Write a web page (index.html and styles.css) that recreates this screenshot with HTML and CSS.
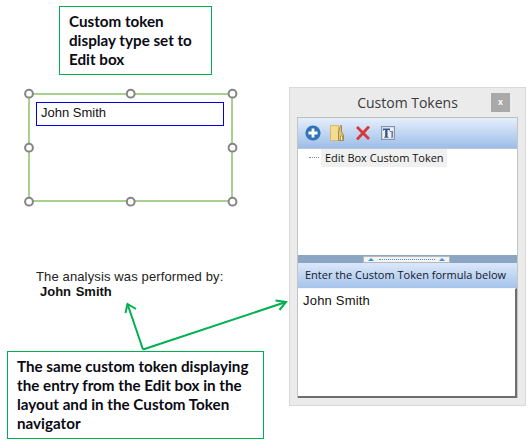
FILE: index.html
```html
<!DOCTYPE html>
<html lang="en">
<head>
<meta charset="utf-8">
<title>Custom Tokens</title>
<link rel="stylesheet" href="styles.css">
</head>
<body>
<main class="canvas">
  <div class="callout callout-top">Custom token display type set to Edit box</div>

  <div class="shape">
    <div class="editbox">John Smith</div>
  </div>
  <svg class="handles" width="220" height="124" viewBox="0 0 220 124" aria-hidden="true">
    <g fill="#fff" stroke="#858585" stroke-width="2">
      <circle cx="10" cy="10.7" r="3.9"/><circle cx="111.7" cy="10.7" r="3.9"/><circle cx="213.5" cy="10.7" r="3.9"/>
      <circle cx="10" cy="64.7" r="3.9"/><circle cx="213.5" cy="64.7" r="3.9"/>
      <circle cx="10" cy="118.7" r="3.9"/><circle cx="111.7" cy="118.7" r="3.9"/><circle cx="213.5" cy="118.7" r="3.9"/>
    </g>
  </svg>

  <p class="analysis">The analysis was performed by:</p>
  <p class="author">John Smith</p>

  <div class="callout callout-bottom">The same custom token displaying the entry from the Edit box in the layout and in the Custom Token navigator</div>

  <svg class="arrows" width="529" height="444" viewBox="0 0 529 444" aria-hidden="true">
    <g fill="none" stroke="#00b050" stroke-width="2">
      <path d="M143 349.5 L127.5 304"/>
      <path d="M125.5 313 L127.5 304 L136 309"/>
      <path d="M143 349.5 L286 302"/>
      <path d="M275.5 300.5 L286 302 L279.5 310"/>
    </g>
  </svg>

  <section class="panel">
    <header class="panel-title">
      <h1>Custom Tokens</h1>
      <div class="close">x</div>
    </header>
    <div class="panel-body">
      <div class="toolbar">
        <svg class="icon-add" width="16" height="16" viewBox="0 0 16 16" aria-hidden="true">
          <circle cx="8" cy="8" r="7.6" fill="#2f74b5"/>
          <path d="M8 3.5v9M3.5 8h9" stroke="#fff" stroke-width="2.8"/>
        </svg>
        <svg class="icon-folder" width="14" height="16" viewBox="0 0 14 16" aria-hidden="true">
          <path d="M.5.5h8v15h-8z" fill="#f2dc92" stroke="#d9ba68"/>
          <path d="M8.5 7l2-6.5h1v6.5l2 3v5.500h-5z" fill="#e3c474" stroke="#a98a45"/>
          <path d="M10.500 11h2v4.500h-2z" fill="#fbf3d2" stroke="#8c7235" stroke-width=".6"/>
        </svg>
        <svg class="icon-del" width="14" height="14" viewBox="0 0 14 14" aria-hidden="true">
          <path d="M1 1l12 12M13 .5L1 13.500" stroke="#d8383a" stroke-width="2.800"/>
        </svg>
        <svg class="icon-text" width="14" height="14" viewBox="0 0 14 14" aria-hidden="true">
          <rect x=".6" y=".6" width="12.800" height="12.800" fill="#eef2f8" stroke="#8494ab" stroke-width="1.200"/>
          <path d="M2 2.600h7v2.400l-1-1H6.500v6.800h.9v1H3.300v-1h.9V4H3l-1 1z" fill="#34508a"/>
          <path d="M8.800 5h3.200v6.700H9.800v-.8h.6v-5H9z" fill="#6b7ea6"/>
        </svg>
      </div>
      <div class="tree">
        <span class="tree-dots"></span>
        <span class="tree-item">Edit Box Custom Token</span>
      </div>
      <div class="splitter">
        <div class="grip">
          <span class="tri"></span>
          <span class="grip-dots"></span>
          <span class="tri"></span>
        </div>
      </div>
      <div class="formula-head">Enter the Custom Token formula below</div>
      <div class="formula">John Smith</div>
    </div>
  </section>
</main>
</body>
</html>
```
FILE: styles.css
```css
* { box-sizing: border-box; }
html, body { margin: 0; padding: 0; background: #fff; }
.canvas {
  position: relative;
  width: 529px;
  height: 444px;
  overflow: hidden;
  font-family: "Liberation Sans", Arial, sans-serif;
  color: #111;
}
.callout {
  position: absolute;
  border: 1px solid #00b050;
  background: #fff;
  font-family: Lato, "Open Sans", sans-serif;
  font-weight: 700;
  font-size: 15.2px;
  line-height: 19px;
  color: #0a0a14;
}
.callout-top { left: 59px; top: 6px; width: 153px; height: 69px; padding: 5px 8px 0 9px; }
.callout-bottom { left: 7px; top: 351px; width: 257px; height: 88px; padding: 5px 8px 0 9px; }

.shape {
  position: absolute;
  left: 28px; top: 93px;
  width: 205px; height: 109px;
  border: 2px solid #a9d18e;
  padding: 7px 7px 0 6px;
}
.editbox {
  width: 188px; height: 24px;
  border: 1px solid #0000e0;
  padding-left: 4px;
  font-size: 13px;
  line-height: 20px;
}
.handles { position: absolute; left: 19px; top: 83px; }
.arrows { position: absolute; left: 0; top: 0; pointer-events: none; }

.analysis, .author { position: absolute; margin: 0; font-size: 13px; line-height: 15px; white-space: nowrap; }
.analysis { left: 36px; top: 269px; color: #222; letter-spacing: .13px; }
.author { left: 40px; top: 284px; font-weight: 700; word-spacing: 1px; }

.panel {
  position: absolute;
  left: 289px; top: 87px;
  width: 237px; height: 319px;
  background: #ebebeb;
  border: 1px solid #d9d9d9;
  padding: 0 7px 7px;
  display: flex;
  flex-direction: column;
}
.panel-title {
  position: relative;
  height: 29px;
  flex: none;
  display: flex;
  align-items: center;
  justify-content: center;
}
.panel-title h1 {
  margin: 0;
  font-family: "Open Sans", sans-serif;
  font-weight: 400;
  font-size: 14px;
  color: #3a3a3a;
}
.close {
  position: absolute;
  right: 8px; top: 5px;
  width: 19px; height: 19px;
  background: #a9a9a9;
  color: #fff;
  font: 700 9px/18px "Liberation Sans", sans-serif;
  text-align: center;
}
.panel-body {
  flex: 1;
  display: flex;
  flex-direction: column;
  border-top: 1px solid #bdbdbd;
  border-left: 1px solid #c4c4c4;
  border-right: 1px solid #c4c4c4;
  min-height: 0;
}
.toolbar {
  height: 30px;
  flex: none;
  display: flex;
  align-items: center;
  padding-left: 7px;
  background: linear-gradient(#e6effc, #9dbde8);
}
.icon-folder { margin-left: 9px; }
.icon-del { margin-left: 12px; }
.icon-text { margin-left: 11px; }
.tree {
  flex: 1;
  background: #fff;
  display: flex;
  align-items: flex-start;
  padding: 0 0 0 11px;
  border-top: 1px solid #b6c6dc;
}
.tree-dots { width: 10px; margin: 8px 2px 0 0; border-top: 1px dotted #888; }
.tree-item {
  background: #f0f0f0;
  font-family: "Open Sans", sans-serif;
  font-size: 11px;
  line-height: 18px;
  height: 18px;
  width: 126px;
  padding-left: 4px;
  color: #111;
  white-space: nowrap;
}
.splitter {
  height: 8px;
  flex: none;
  background: #8aa6c3;
  display: flex;
  justify-content: center;
  align-items: center;
}
.grip {
  width: 87px; height: 7px;
  background: #f3f3f3;
  border: 1px solid #b8b8b8;
  display: flex;
  align-items: center;
  justify-content: space-between;
  padding: 0 4px;
  margin-right: 2px;
}
.tri {
  width: 0; height: 0;
  border-left: 3px solid transparent;
  border-right: 3px solid transparent;
  border-bottom: 3px solid #3c92e8;
}
.grip-dots { width: 56px; border-top: 1px dotted #3c92e8; }
.formula-head {
  height: 25px;
  flex: none;
  padding-left: 7px;
  background: linear-gradient(#dbe8fa, #a5c3ea);
  font-family: "Open Sans", sans-serif;
  font-size: 11px;
  font-weight: 400;
  line-height: 24px;
  color: #10182a;
  white-space: nowrap;
}
.formula {
  flex: none;
  height: 110px;
  background: #fff;
  border-top: 1px solid #f5f5f5;
  border-right: 2px solid #6e6e6e;
  border-bottom: 2px solid #6e6e6e;
  padding: 4px 0 0 5px;
  font-size: 13px;
  line-height: 16px;
  letter-spacing: .2px;
}
```
